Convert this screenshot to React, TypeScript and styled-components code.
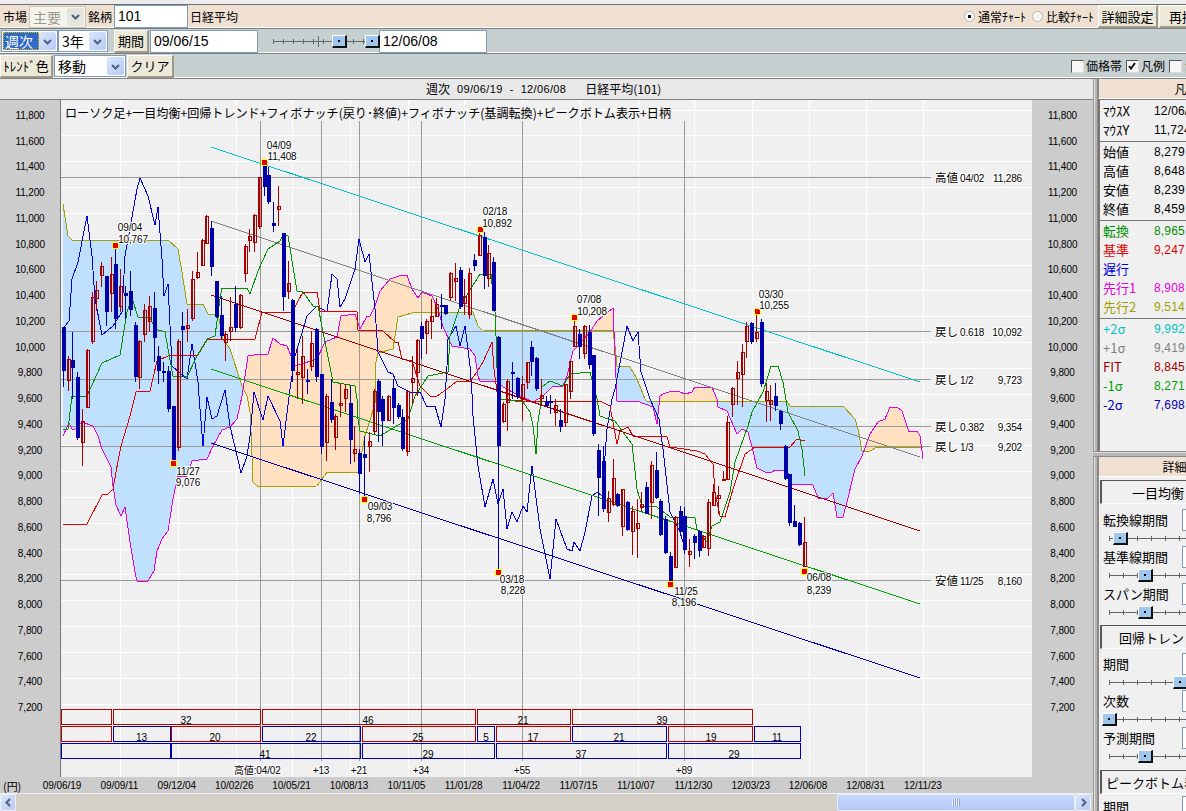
import React from 'react';
import styled, { createGlobalStyle } from 'styled-components';

const Global = createGlobalStyle`
  html, body { margin: 0; padding: 0; background: #fff; }
  * { box-sizing: border-box; }
`;

const JP = `"Noto Sans CJK JP", "Liberation Sans", sans-serif`;
const LAT = `"Liberation Sans", "Noto Sans CJK JP", sans-serif`;

const Page = styled.div`
  width: 1186px; height: 811px; overflow: hidden; display: flex; flex-direction: column;
  font-family: ${JP}; font-size: 12px; line-height: 1; color: #000; background: #f0f0f0;
`;
const TopStrip = styled.div`height: 5px; background: #ececec; border-bottom: 1px solid #707070; flex: none;`;
const Bar = styled.div<{ $peach?: boolean; $h: number }>`
  height: ${p => p.$h}px; flex: none; display: flex; align-items: center; white-space: nowrap; overflow: hidden;
  background: ${p => (p.$peach ? '#efe0d2' : '#c6d0d0')};
  border-bottom: 1px solid #808080; box-shadow: inset 0 -1px 0 #fff;
`;
const Label = styled.span<{ $ml?: number; $mr?: number; $color?: string }>`
  margin-left: ${p => p.$ml ?? 0}px; margin-right: ${p => p.$mr ?? 0}px; color: ${p => p.$color ?? '#000'};
  flex: none;
`;
const Spacer = styled.div`flex: 1;`;
const TextInput = styled.div<{ $w: number; $ml?: number; $h?: number }>`
  width: ${p => p.$w}px; height: ${p => p.$h ?? 23}px; margin-left: ${p => p.$ml ?? 0}px; flex: none;
  background: #fff; border: 1px solid #7f9db9; font-family: ${LAT}; font-size: 14px; padding: 3px 0 0 3px;
`;
const ArrowBtn = styled.div`
  width: 17px; height: 100%; flex: none; display: flex; align-items: center; justify-content: center;
  background: linear-gradient(135deg, #dce6fb, #b6c9f5); border-radius: 2px;
`;
const Chevron = ({ dir = 'down' }: { dir?: 'down' | 'left' | 'right' }) => (
  <svg width="9" height="9" viewBox="0 0 9 9">
    <path
      d={dir === 'down' ? 'M1 3l3.5 3.5L8 3' : dir === 'left' ? 'M6 1L2.5 4.5 6 8' : 'M3 1l3.5 3.5L3 8'}
      fill="none" stroke="#4d6185" strokeWidth="2"
    />
  </svg>
);
const SelectBox = styled.div<{ $w: number; $ml?: number; $disabled?: boolean }>`
  width: ${p => p.$w}px; height: 22px; margin-left: ${p => p.$ml ?? 0}px; flex: none; display: flex; align-items: center;
  border: 1px solid ${p => (p.$disabled ? '#c9c7ba' : '#7f9db9')}; padding: 1px;
  color: ${p => (p.$disabled ? '#9a9a92' : '#000')}; font-size: 14px; background: ${p => (p.$disabled ? '#f4f3ec' : '#fff')};
`;
const SelectText = styled.span<{ $hl?: boolean }>`
  flex: 1; height: 100%; padding: 2px 0 0 2px; display: block;
  ${p => (p.$hl ? 'background:#316ac5;color:#fff;outline:1px dotted #e0c000;outline-offset:-1px;' : '')}
`;
const DisabledArrow = styled(ArrowBtn)`background: #e6e5dd;`;
const Btn = styled.div<{ $w: number; $ml?: number; $mr?: number }>`
  width: ${p => p.$w}px; height: 23px; margin-left: ${p => p.$ml ?? 0}px; margin-right: ${p => p.$mr ?? 0}px; flex: none;
  display: flex; align-items: center; justify-content: center; font-size: 13px;
  background: #ece9d8; border-top: 1px solid #fff; border-left: 1px solid #fff;
  border-right: 2px solid #9d9a88; border-bottom: 2px solid #9d9a88; overflow: hidden;
`;
const SliderTrack = styled.div<{ $w: number; $ml?: number }>`
  position: relative; width: ${p => p.$w}px; height: 11px; margin-left: ${p => p.$ml ?? 0}px; flex: none;
  background:
    linear-gradient(#666, #666) 0 5px / 100% 1px no-repeat,
    repeating-linear-gradient(90deg, #666 0 1px, transparent 1px 14px) 0 3px / 100% 5px no-repeat;
`;
const ToolbarTrack = styled(SliderTrack)`
  background:
    linear-gradient(#666, #666) 0 5px / 100% 1px no-repeat,
    linear-gradient(#666, #666) 45px 0 / 1px 100% no-repeat,
    repeating-linear-gradient(90deg, #666 0 1px, transparent 1px 10px) 0 3px / 100% 5px no-repeat;
`;
const Thumb = styled.div<{ $left: number }>`
  position: absolute; top: -1px; left: ${p => p.$left}px; width: 15px; height: 13px;
  background: #9fc7ee; border-top: 1px solid #fff; border-left: 1px solid #fff;
  border-right: 2px solid #111; border-bottom: 2px solid #111;
  &::after { content: ''; position: absolute; left: 5px; top: 4px; width: 2px; height: 2px; background: #000; }
`;
const Radio = styled.div<{ $on?: boolean; $ml?: number }>`
  width: 11px; height: 11px; border-radius: 50%; margin-left: ${p => p.$ml ?? 0}px; flex: none;
  background: radial-gradient(circle, ${p => (p.$on ? '#111 0 1.8px' : '#eee 0 1.8px')}, #f8f8f8 2px 100%);
  border: 1px solid #b5b5ad; margin-right: 3px;
`;
const Check = styled.div<{ $ml?: number }>`
  width: 13px; height: 13px; margin-left: ${p => p.$ml ?? 0}px; flex: none; margin-right: 2px; background: #f6f6f6;
  border: 1px solid #555; border-right-color: #ddd; border-bottom-color: #ddd; display: flex; align-items: center; justify-content: center;
`;

const Main = styled.div`flex: 1; min-height: 0; display: flex;`;
const ChartCol = styled.div`width: 1093px; flex: none; display: flex; flex-direction: column;`;
const TitleBand = styled.div`
  height: 21px; flex: none; background: #e8e8e8; border-bottom: 1px solid #808080; display: flex; align-items: center;
  padding-left: 426px; font-size: 12px; white-space: nowrap;
`;
const TitleDate = styled.span<{ $ml: number }>`
  margin-left: ${p => p.$ml}px; font-family: ${LAT}; font-size: 11px; letter-spacing: 0.35px; flex: none;
`;
const ChartRow = styled.div`height: 677px; flex: none; display: flex;`;
const Axis = styled.div<{ $w: number; $line?: boolean }>`
  width: ${p => p.$w}px; flex: none; background: #ccc; display: flex; flex-direction: column; padding-top: 0;
  border-right: ${p => (p.$line ? '1px solid #777' : 'none')};
`;
const AxisLabel = styled.div`
  height: 25.75px; display: flex; align-items: center; justify-content: center;
  font-family: ${LAT}; font-size: 10px; letter-spacing: -0.15px; flex: none;
`;
const AxisTop = styled.div`height: 0; margin-top: 3px; flex: none;`;
const ChartSvg = styled.svg`width: 971px; height: 677px; flex: none; display: block;`;
const DateAxis = styled.div`
  height: 17px; flex: none; background: #ccc; border-bottom: 1px solid #eee; display: flex; align-items: center; padding-top: 2px;
  font-family: ${LAT}; font-size: 10px; letter-spacing: -0.05px;
`;
const Yen = styled.span`width: 33.3px; padding-left: 3px; font-family: ${JP}; font-size: 11px; flex: none;`;
const DateLabel = styled.span`width: 57.4px; text-align: center; flex: none;`;
const ScrollBar = styled.div`
  flex: 1; background: #d4d0c8; display: flex; align-items: stretch;
`;
const ScrollBtn = styled.div`
  width: 16px; flex: none; display: flex; align-items: center; justify-content: center;
  background: linear-gradient(135deg, #dce6fb, #b6c9f5); border: 1px solid #eef2fd; border-radius: 2px;
`;
const ScrollThumb = styled.div`
  width: 238px; margin-left: 821px; flex: none; display: flex; align-items: center; justify-content: center;
  background: linear-gradient(#c7d7fb, #b4c9f7); border: 1px solid #e6edfd; border-radius: 2px;
  &::after { content: ''; width: 8px; height: 7px; background: repeating-linear-gradient(90deg, #eef3fe 0 1px, #8aa4dc 1px 2px); }
`;

const Splitter = styled.div`
  width: 5px; flex: none; background: linear-gradient(90deg, #999 0 1px, #e2e2e2 1px 2px, #b5b5b5 2px 4px, #888 4px);
`;
const Panel = styled.div`width: 176px; flex: none; display: flex; flex-direction: column; background: #f0f0f0;`;
const PeachHead = styled.div`
  height: 20px; flex: none; background: #efe0d2; display: flex; align-items: center; justify-content: center;
  border-left: 1px solid #888; border-bottom: 1px solid #fff;
`;
const Legend = styled.div`
  height: 352px; flex: none; padding-top: 1px; border-left: 2px solid #777; border-top: 1px solid #777; background: #f0f0f0;
`;
const LegendGroup = styled.div`border-bottom: 1px solid #777; padding: 0 0 2px 3px;`;
const LegendLast = styled.div`padding: 0 0 2px 3px;`;
const LegendRow = styled.div<{ $color?: string }>`
  height: 19px; display: flex; align-items: center; color: ${p => p.$color ?? '#000'}; font-size: 13px;
`;
const LegendKey = styled.span`width: 51px; flex: none;`;
const LegendVal = styled.span`font-family: ${LAT}; font-size: 12px; letter-spacing: 0.15px;`;
const HSplit = styled.div`
  height: 6px; flex: none; background: linear-gradient(#888 0 1px, #ddd 1px 2px, #b8b8b8 2px 5px, #888 5px); margin-left: -5px;
`;
const Form = styled.div`flex: 1; min-height: 0; overflow: hidden; padding: 3px 0 0 1px; display: flex; flex-direction: column; border-left: 1px solid #888;`;
const TabHead = styled.div<{ $mt?: number; $mb?: number }>`
  width: 114px; height: 24px; flex: none; margin-top: ${p => p.$mt ?? 0}px; margin-bottom: ${p => p.$mb ?? 0}px; display: flex; align-items: center; justify-content: center;
  font-size: 13px; white-space: nowrap; border-top: 1px solid #555; border-left: 2px solid #555; border-bottom: 1px solid #fff; background: #f0f0f0;
`;
const Field = styled.div`flex: none; height: 37px; display: flex; flex-direction: column;`;
const FieldTop = styled.div`height: 23px; display: flex; align-items: center; justify-content: space-between; flex: none; width: 102px; padding-left: 3px; white-space: nowrap; font-size: 13px;`;
const SmallInput = styled(TextInput)`height: 22px;`;
const SliderRow = styled.div`flex: 1; display: flex; align-items: center; padding-left: 9px;`;

const Tx = styled.text`font-family: ${LAT}; font-size: 10px; fill: #000; letter-spacing: -0.15px;`;
const Halo = styled(Tx)`paint-order: stroke; stroke: #fff; stroke-width: 2px; stroke-linejoin: round;`;
const JpTx = styled(Halo)`font-family: ${JP}; font-size: 11.5px; letter-spacing: 0;`;
const Caption = styled.text`font-family: ${JP}; font-size: 12.5px; fill: #000;`;

const yv = (v: number) => 705 - (v - 7200) * 0.1291;
const AXIS = Array.from({ length: 24 }, (_, i) => 11800 - i * 200);
const fmt = (v: number) => v.toLocaleString('en-US');
const VGRID = [120.5, 178.5, 236, 292.5, 350.5, 408, 464.5, 522.5, 580, 638, 694.5, 752, 809, 866, 923];
const DATES = ['09/06/19', '09/09/11', '09/12/04', '10/02/26', '10/05/21', '10/08/13', '10/11/05', '11/01/28', '11/04/22', '11/07/15', '11/10/07', '11/12/30', '12/03/23', '12/06/08', '12/08/31', '12/11/23'];
const FIBV = [260, 321, 359.5, 421.5, 522, 684];
const FIBH = [178, 332, 380, 427, 447, 581];

// page pixel coordinates: [x, bodyTop, bodyBottom, wickTop, wickBottom, up]
type C = [number, number, number, number, number, number];
const CANDLES: C[] = [
  [63, 328, 372, 328, 388, 0], [68, 360, 381, 357, 392, 1], [72, 361, 369, 333, 400, 0], [77, 378, 439, 373, 441, 0],
  [82, 422, 443, 410, 467, 1], [87, 351, 408, 350, 408, 1], [92, 298, 342, 293, 345, 1], [96, 291, 299, 282, 312, 1],
  [101, 267, 276, 263, 288, 1], [106, 277, 313, 277, 327, 0], [111, 275, 294, 258, 313, 1], [115, 265, 320, 247, 330, 0],
  [120, 287, 307, 270, 313, 1], [125, 294, 297, 287, 320, 0], [130, 292, 311, 272, 317, 0], [135, 326, 378, 323, 383, 0],
  [139, 342, 378, 341, 390, 1], [144, 311, 335, 305, 343, 1], [149, 307, 322, 297, 333, 1], [154, 309, 339, 293, 363, 0],
  [158, 357, 372, 347, 385, 0], [163, 372, 374, 363, 383, 0], [168, 372, 410, 367, 413, 0], [173, 407, 462, 407, 462, 0],
  [178, 342, 448, 340, 452, 1], [182, 327, 331, 313, 378, 0], [187, 326, 329, 310, 343, 1], [192, 280, 319, 272, 322, 1],
  [197, 273, 278, 253, 280, 1], [202, 241, 266, 240, 266, 1], [206, 217, 244, 216, 245, 1], [211, 229, 268, 222, 277, 0],
  [216, 282, 318, 282, 319, 0], [221, 316, 337, 297, 340, 0], [225, 335, 343, 332, 362, 1], [230, 328, 332, 298, 342, 1],
  [235, 305, 329, 287, 333, 0], [240, 296, 328, 295, 330, 1], [245, 247, 274, 245, 283, 1], [249, 237, 241, 230, 253, 1],
  [254, 216, 243, 215, 253, 1], [259, 178, 227, 178, 230, 1], [264, 166, 188, 165, 197, 0], [268, 176, 203, 168, 205, 0],
  [273, 224, 227, 203, 233, 0], [278, 207, 210, 187, 227, 1], [283, 234, 298, 234, 312, 0], [288, 284, 292, 262, 300, 1],
  [292, 301, 372, 300, 383, 0], [297, 373, 375, 350, 400, 1], [302, 357, 378, 337, 405, 1], [307, 381, 383, 370, 395, 0],
  [311, 344, 367, 332, 372, 1], [316, 330, 378, 329, 383, 0], [321, 375, 448, 375, 455, 0], [326, 397, 443, 395, 462, 1],
  [331, 403, 421, 380, 424, 0], [335, 417, 438, 415, 451, 1], [340, 404, 406, 385, 418, 1], [345, 390, 399, 385, 413, 1],
  [350, 404, 441, 387, 465, 0], [354, 450, 454, 427, 463, 1], [359, 454, 475, 450, 495, 0], [364, 455, 459, 437, 497, 0],
  [369, 442, 447, 433, 473, 1], [374, 392, 432, 390, 435, 1], [378, 382, 413, 380, 443, 0], [382, 400, 422, 397, 447, 0],
  [388, 397, 421, 396, 421, 1], [393, 389, 409, 380, 425, 0], [398, 406, 418, 404, 420, 0], [402, 418, 450, 410, 452, 0],
  [407, 392, 452, 392, 457, 1], [412, 379, 383, 357, 405, 1], [417, 341, 373, 340, 397, 1], [421, 327, 340, 323, 360, 0],
  [426, 322, 334, 320, 355, 1], [431, 317, 322, 300, 340, 1], [436, 305, 317, 299, 318, 1], [441, 306, 308, 295, 330, 0],
  [445, 306, 315, 306, 316, 0], [450, 274, 298, 273, 302, 1], [455, 279, 282, 264, 302, 1], [460, 271, 308, 268, 310, 0],
  [464, 297, 304, 280, 316, 1], [469, 274, 315, 269, 320, 1], [474, 261, 267, 255, 272, 0], [479, 236, 256, 233, 257, 1],
  [484, 238, 277, 233, 290, 0], [488, 254, 279, 246, 288, 1], [493, 263, 312, 258, 312, 0], [498, 338, 447, 337, 570, 0],
  [503, 405, 422, 403, 424, 1], [507, 382, 403, 380, 432, 1], [512, 373, 375, 363, 400, 0], [517, 379, 398, 378, 400, 0],
  [522, 385, 400, 377, 422, 1], [527, 363, 383, 363, 390, 1], [531, 348, 363, 342, 377, 0], [536, 359, 390, 358, 392, 0],
  [541, 396, 399, 380, 407, 1], [546, 402, 407, 397, 408, 0], [550, 402, 404, 396, 415, 0], [555, 406, 413, 400, 427, 1],
  [560, 421, 428, 410, 433, 0], [565, 385, 423, 385, 428, 1], [570, 362, 392, 362, 400, 1], [574, 327, 347, 320, 347, 1],
  [579, 335, 348, 330, 360, 0], [584, 327, 354, 326, 360, 1], [589, 333, 366, 326, 370, 0], [593, 356, 435, 356, 437, 0],
  [598, 451, 479, 445, 517, 0], [603, 462, 510, 447, 513, 0], [608, 499, 513, 492, 523, 1], [613, 479, 505, 460, 507, 1],
  [617, 495, 507, 494, 508, 0], [622, 490, 527, 490, 537, 1], [627, 503, 531, 502, 532, 0], [632, 512, 532, 507, 556, 1],
  [637, 524, 529, 500, 559, 1], [641, 505, 508, 493, 513, 1], [646, 488, 515, 483, 515, 0], [651, 466, 503, 462, 520, 1],
  [656, 471, 499, 453, 500, 0], [660, 502, 536, 500, 537, 0], [665, 520, 554, 517, 555, 0], [670, 557, 583, 553, 583, 0],
  [675, 518, 568, 517, 569, 1], [680, 512, 533, 507, 534, 0], [684, 517, 551, 508, 555, 0], [689, 552, 555, 540, 568, 1],
  [694, 537, 544, 535, 560, 0], [699, 532, 552, 531, 558, 0], [703, 537, 548, 536, 549, 1], [708, 503, 549, 500, 557, 1],
  [713, 493, 506, 485, 507, 1], [718, 496, 499, 487, 515, 1], [723, 480, 481, 472, 481, 1], [727, 423, 480, 417, 481, 1],
  [732, 389, 405, 388, 418, 1], [737, 373, 379, 362, 406, 1], [742, 353, 375, 345, 408, 1], [746, 327, 342, 323, 359, 1],
  [751, 324, 343, 323, 345, 0], [756, 333, 339, 313, 343, 1], [761, 323, 385, 320, 388, 0], [766, 392, 401, 384, 423, 1],
  [770, 401, 405, 386, 422, 1], [775, 397, 407, 384, 412, 0], [780, 412, 425, 411, 431, 0], [785, 447, 480, 446, 481, 0],
  [789, 475, 524, 475, 527, 0], [794, 522, 528, 506, 528, 0], [799, 524, 546, 523, 547, 0], [804, 543, 567, 518, 568, 1],
];

const S2 = '63,205 68,237 72,241 168,241 178,250 182,273 187,305 203,305 208,315 218,315 223,340 230,350 242,387 247,397 250,413 251,433 253,483 258,488 317,487 327,473 358,473 365,437 375,405 376,363 378,354 393,350 398,318 412,314 473,313 478,327 482,331 613,332 615,347 617,367 630,368 637,380 645,400 647,402 787,402 790,407 843,407 855,420 858,430 862,452 870,452 877,448 923,448';
const S1 = '63,437 69,424 72,430 75,430 82,423 93,427 98,437 102,450 111,468 113,487 116,506 121,517 125,508 130,543 135,573 137,582 148,582 154,572 157,552 162,540 168,532 173,500 177,480 178,477 187,477 192,462 207,460 213,447 222,431 230,428 237,420 242,397 248,357 260,355 268,355 273,339 280,345 287,347 295,367 317,360 325,343 337,338 341,317 355,315 360,330 367,317 370,317 375,307 380,292 390,280 402,276 407,276 412,290 418,299 422,293 432,297 438,310 443,328 452,347 470,350 475,357 478,377 480,382 497,383 503,388 520,397 533,403 543,397 552,388 563,387 567,377 573,352 578,347 590,333 597,322 613,309 614,333 617,402 637,402 653,408 657,425 660,397 663,395 672,392 680,393 685,395 692,393 695,388 712,388 717,400 718,408 727,412 737,435 742,430 748,433 753,452 757,469 765,473 772,473 775,471 787,471 792,485 813,486 818,499 827,500 833,494 837,518 843,518 847,503 855,470 862,457 870,435 878,423 885,420 890,408 897,408 902,412 909,433 917,432 920,437 923,460';
const rev = (s: string) => s.split(' ').reverse().join(' ');
const CLOUD = `${S1} ${rev(S2)}`;
const ORANGE: [number, number][] = [[243, 438], [590, 614], [658, 717], [863, 924]];
const BLUE: [number, number][] = [[60, 243], [438, 590], [614, 658], [717, 863]];

const KIJUN = '63,525 87,525 102,496 108,495 113,490 118,462 121,447 130,417 136,393 150,392 157,362 170,356 198,356 207,341 255,340 262,313 292,313 303,293 317,293 320,312 357,313 358,331 383,332 395,343 398,343 402,360 412,362 420,387 430,397 437,397 447,390 457,382 470,382 477,373 483,363 492,343 494,370 498,400 523,402 600,402 610,407 617,445 620,432 628,428 633,437 667,438 670,448 697,452 705,455 713,465 715,493 720,517 725,518 733,490 745,455 755,448 790,448 797,440 805,442';
const TENKAN = '63,430 68,430 72,397 87,397 102,364 120,356 127,313 132,299 138,318 150,318 155,330 165,333 173,377 187,378 197,357 207,340 215,337 220,300 222,289 247,289 250,295 258,272 268,250 280,242 283,236 288,237 297,292 303,293 313,307 318,307 323,333 333,383 355,387 357,400 358,420 360,432 380,437 408,420 415,397 428,377 448,373 450,337 460,307 480,275 491,275 495,313 496,337 498,400 523,403 530,413 533,427 536,455 538,423 540,410 542,388 550,382 563,387 570,375 590,373 597,400 600,417 608,420 615,422 622,432 632,445 637,490 642,507 657,508 670,518 695,519 697,530 707,543 712,527 720,523 730,493 735,463 748,427 752,413 763,393 768,377 771,367 778,367 783,383 788,413 798,432 802,450 805,477';
const CHIKOU = '63,330 69,322 72,280 78,263 87,217 92,257 95,300 102,336 113,327 122,313 125,257 137,190 140,179 148,197 155,226 158,208 162,260 164,297 168,285 172,367 187,380 192,345 198,383 199,397 203,447 207,398 212,420 217,417 225,391 230,427 235,448 241,474 247,457 250,437 254,393 263,421 268,397 280,422 283,447 290,390 295,357 307,317 317,307 327,313 332,275 337,280 340,308 345,300 355,270 359,240 365,263 369,255 375,310 378,353 388,373 393,375 398,387 410,393 420,393 427,408 435,407 441,428 445,400 447,367 448,340 456,327 460,347 465,327 470,367 472,395 473,417 478,467 485,508 493,480 498,505 503,490 507,530 512,513 517,523 523,507 527,513 532,467 540,530 550,580 556,520 567,550 572,552 574,543 580,552 585,533 592,497 597,493 602,497 607,430 612,400 615,390 627,327 633,342 638,333 641,373 650,400 659,420 663,450 670,513 680,533 685,550';

const TRENDS: [number, number, number, number, string][] = [
  [211, 148, 920, 383, '#00c4c8'], [211, 222, 920, 458, '#808080'], [211, 296, 920, 532, '#a00000'],
  [211, 370, 920, 605, '#00a000'], [211, 444, 920, 679, '#0000b0'],
];
const PEAKS = [[115, 246], [264, 163], [173, 464], [364, 500], [480, 230], [498, 573], [574, 318], [670, 585], [757, 312], [804, 572]];
const PLABELS: [number, number, string][] = [
  [279, 150, '04/09'], [282, 161, '11,408'], [130, 232, '09/04'], [133, 244, '10,767'], [188, 476, '11/27'], [188, 487, '9,076'],
  [380, 511, '09/03'], [379, 523, '8,796'], [495, 216, '02/18'], [497, 228, '10,892'], [589, 304, '07/08'], [592, 316, '10,208'],
  [512, 584, '03/18'], [513, 595, '8,228'], [686, 596, '11/25'], [684, 607, '8,196'], [771, 299, '03/30'], [774, 310, '10,255'],
  [819, 582, '06/08'], [819, 595, '8,239'],
];
const FIBLABELS: [number, string, string, string][] = [
  [183, '高値', '04/02', '11,286'], [337, '戻し', '0.618', '10,092'], [385, '戻し', '1/2', '9,723'],
  [432, '戻し', '0.382', '9,354'], [452, '戻し', '1/3', '9,202'], [586, '安値', '11/25', '8,160'],
];
const RED = '#b00000';
const NAVY = '#0000b0';
const BOXES: [number, number, number, string][] = [
  [710, 61, 111.5, RED], [710, 113.5, 260.5, RED], [710, 262.5, 475.5, RED], [710, 477.5, 570.5, RED], [710, 572.5, 752.5, RED],
  [727, 61, 111.5, RED], [727, 113.5, 170.5, NAVY], [727, 171.5, 260.5, RED], [727, 262.5, 360.5, NAVY], [727, 362.5, 475.5, RED],
  [727, 477.5, 494.5, NAVY], [727, 496.5, 570.5, RED], [727, 572.5, 666.5, NAVY], [727, 668.5, 752.5, RED], [727, 754.5, 800.5, NAVY],
  [744, 61, 170.5, NAVY], [744, 171.5, 360.5, NAVY], [744, 362.5, 494.5, NAVY], [744, 496.5, 666.5, NAVY], [744, 668.5, 800.5, NAVY],
];
const BOXLABELS: [number, number, string][] = [
  [186, 725, '32'], [368, 725, '46'], [523, 725, '21'], [662, 725, '39'], [141.5, 742, '13'], [215, 742, '20'], [311, 742, '22'], [418, 742, '25'],
  [486, 742, '5'], [533, 742, '17'], [619, 742, '21'], [711, 742, '19'], [777, 742, '11'], [265, 759, '41'], [428, 759, '29'], [581, 759, '37'], [734, 759, '29'],
];
const CAPTIONS: [number, string][] = [[321, '+13'], [359, '+21'], [421, '+34'], [522, '+55'], [684, '+89']];

const Chart = () => (
  <ChartSvg viewBox="61 101 971 677" shapeRendering="crispEdges">
    <rect x="61" y="101" width="971" height="677" fill="#f0f0f0" />
    {AXIS.map(v => <line key={v} x1="61" x2="1032" y1={yv(v)} y2={yv(v)} stroke="#fff" />)}
    {VGRID.map(x => <line key={x} x1={x} x2={x} y1="101" y2="778" stroke="#fff" />)}
    <defs>
      {BLUE.map(([a, b], i) => <clipPath key={i} id={`b${i}`}><rect x={a} y="101" width={b - a} height="677" /></clipPath>)}
      {ORANGE.map(([a, b], i) => <clipPath key={i} id={`o${i}`}><rect x={a} y="101" width={b - a} height="677" /></clipPath>)}
    </defs>
    {BLUE.map((_, i) => <polygon key={i} points={CLOUD} fill="#c0e0ff" clipPath={`url(#b${i})`} />)}
    {ORANGE.map((_, i) => <polygon key={i} points={CLOUD} fill="#ffe0c0" clipPath={`url(#o${i})`} />)}
    {FIBH.map(y => <line key={y} x1="61" x2="931" y1={y} y2={y} stroke="#999" />)}
    {FIBV.map(x => <line key={x} x1={x} x2={x} y1="122" y2="762" stroke="#999" />)}
    <polyline points={S2} fill="none" stroke="#a0a000" />
    <polyline points={S1} fill="none" stroke="#e000e0" />
    <polyline points={CHIKOU} fill="none" stroke="#0000e0" />
    <polyline points={KIJUN} fill="none" stroke="#e00000" />
    <polyline points={TENKAN} fill="none" stroke="#009000" />
    {TRENDS.map(([a, b, c, d, col]) => <line key={col} x1={a} y1={b} x2={c} y2={d} stroke={col} />)}
    {CANDLES.map(([x, t, b, wt, wb, up], i) => {
      const col = up ? '#a80000' : '#0000a8';
      return (
        <g key={i}>
          <line x1={x + 0.5} x2={x + 0.5} y1={wt} y2={wb} stroke={col} />
          {up
            ? <rect x={x - 1} y={t + 0.5} width="3" height={b - t} fill="none" stroke={col} />
            : <rect x={x - 1.5} y={t} width="4" height={b - t} fill={col} />}
        </g>
      );
    })}
    {PEAKS.map(([x, y]) => (
      <g key={x}>
        <rect x={x - 3} y={y - 3} width="7" height="7" rx="2" fill="#ffff00" />
        <rect x={x - 2} y={y - 2} width="5" height="5" fill="#e00000" />
      </g>
    ))}
    {PLABELS.map(([x, y, t]) => <Halo key={t + y} x={x} y={y} textAnchor="middle">{t}</Halo>)}
    {FIBLABELS.map(([y, a, b, c]) => (
      <g key={y}>
        <JpTx x="935" y={y}>{a}</JpTx>
        <Halo x="960" y={y}>{b}</Halo>
        <Halo x="1022" y={y} textAnchor="end">{c}</Halo>
      </g>
    ))}
    {BOXES.map(([y, a, b, col], i) => <rect key={i} x={a} y={y + 0.5} width={b - a} height="15" fill="none" stroke={col} />)}
    {BOXLABELS.map(([x, y, t]) => <Tx key={x} x={x} y={y} textAnchor="middle">{t}</Tx>)}
    <Halo x="234" y="775">高値:04/02</Halo>
    {CAPTIONS.map(([x, t]) => <Halo key={x} x={x} y="775" textAnchor="middle">{t}</Halo>)}
    <Caption x="65" y="119" textLength="606" lengthAdjust="spacingAndGlyphs">ローソク足+一目均衡+回帰トレンド+フィボナッチ(戻り･終値)+フィボナッチ(基調転換)+ピークボトム表示+日柄</Caption>
  </ChartSvg>
);

const AxisCol = ({ w, line }: { w: number; line?: boolean }) => (
  <Axis $w={w} $line={line}>
    <AxisTop />
    {AXIS.map(v => <AxisLabel key={v}>{fmt(v)}</AxisLabel>)}
  </Axis>
);

const LEG1: [string, string][] = [['始値', '8,279'], ['高値', '8,648'], ['安値', '8,239'], ['終値', '8,459']];
const LEG2: [string, string, string][] = [['転換', '8,965', '#009000'], ['基準', '9,247', '#e00000'], ['遅行', '', '#0000e0'], ['先行1', '8,908', '#e000e0'], ['先行2', '9,514', '#a0a000']];
const LEG3: [string, string, string][] = [['+2σ', '9,992', '#00c4c8'], ['+1σ', '9,419', '#808080'], ['FIT', '8,845', '#a00000'], ['-1σ', '8,271', '#00a000'], ['-2σ', '7,698', '#0000b0']];

const SliderField = ({ label, left }: { label: string; left: number }) => (
  <Field>
    <FieldTop>{label}<SmallInput $w={20} /></FieldTop>
    <SliderRow><SliderTrack $w={78}><Thumb $left={left} /></SliderTrack></SliderRow>
  </Field>
);

export default function App() {
  return (
    <Page>
      <Global />
      <TopStrip />
      <Bar $peach $h={24}>
        <Label $ml={3}>市場</Label>
        <SelectBox $w={57} $ml={2} $disabled><SelectText>主要</SelectText><DisabledArrow><Chevron /></DisabledArrow></SelectBox>
        <Label $ml={2}>銘柄</Label>
        <TextInput $w={74} $ml={2}>101</TextInput>
        <Label $ml={2}>日経平均</Label>
        <Spacer />
        <Radio $on />
        <Label>通常ﾁｬｰﾄ</Label>
        <Radio $ml={6} />
        <Label>比較ﾁｬｰﾄ</Label>
        <Btn $w={60} $ml={4}>詳細設定</Btn>
        <Btn $w={60} $ml={1} $mr={-33}>再描画</Btn>
      </Bar>
      <Bar $h={25}>
        <SelectBox $w={57} $ml={1}><SelectText $hl>週次</SelectText><ArrowBtn><Chevron /></ArrowBtn></SelectBox>
        <SelectBox $w={50}><SelectText>3年</SelectText><ArrowBtn><Chevron /></ArrowBtn></SelectBox>
        <Btn $w={35} $ml={6}>期間</Btn>
        <TextInput $w={108} $ml={1}>09/06/15</TextInput>
        <ToolbarTrack $w={106} $ml={15}><Thumb $left={59} /><Thumb $left={92} /></ToolbarTrack>
        <TextInput $w={108}>12/06/08</TextInput>
      </Bar>
      <Bar $h={25}>
        <Btn $w={53}>ﾄﾚﾝﾄﾞ色</Btn>
        <SelectBox $w={72} $ml={1}><SelectText>移動</SelectText><ArrowBtn><Chevron /></ArrowBtn></SelectBox>
        <Btn $w={47} $ml={1}>クリア</Btn>
        <Spacer />
        <Check />
        <Label>価格帯</Label>
        <Check $ml={4}>
          <svg width="10" height="10" viewBox="0 0 10 10"><path d="M2 5l2 2.5L8 2" fill="none" stroke="#111" strokeWidth="2" /></svg>
        </Check>
        <Label>凡例</Label>
        <Check $ml={4} />
        <Label $mr={-10}>シ</Label>
      </Bar>
      <Main>
        <ChartCol>
          <TitleBand>
            <Label>週次</Label>
            <TitleDate $ml={7}>09/06/19</TitleDate>
            <TitleDate $ml={7}>-</TitleDate>
            <TitleDate $ml={7}>12/06/08</TitleDate>
            <Label $ml={19}>日経平均(101)</Label>
          </TitleBand>
          <ChartRow>
            <AxisCol w={61} line />
            <Chart />
            <AxisCol w={61} />
          </ChartRow>
          <DateAxis>
            <Yen>(円)</Yen>
            {DATES.map(d => <DateLabel key={d}>{d}</DateLabel>)}
          </DateAxis>
          <ScrollBar>
            <ScrollBtn><Chevron dir="left" /></ScrollBtn>
            <ScrollThumb />
            <ScrollBtn><Chevron dir="right" /></ScrollBtn>
          </ScrollBar>
        </ChartCol>
        <Splitter />
        <Panel>
          <PeachHead>凡例</PeachHead>
          <Legend>
            <LegendGroup>
              <LegendRow><LegendKey>ﾏｳｽX</LegendKey><LegendVal>12/06/08</LegendVal></LegendRow>
              <LegendRow><LegendKey>ﾏｳｽY</LegendKey><LegendVal>11,724</LegendVal></LegendRow>
            </LegendGroup>
            <LegendGroup>
              {LEG1.map(([k, v]) => <LegendRow key={k}><LegendKey>{k}</LegendKey><LegendVal>{v}</LegendVal></LegendRow>)}
            </LegendGroup>
            <LegendGroup>
              {LEG2.map(([k, v, c]) => <LegendRow key={k} $color={c}><LegendKey>{k}</LegendKey><LegendVal>{v}</LegendVal></LegendRow>)}
            </LegendGroup>
            <LegendLast>
              {LEG3.map(([k, v, c]) => <LegendRow key={k} $color={c}><LegendKey>{k}</LegendKey><LegendVal>{v}</LegendVal></LegendRow>)}
            </LegendLast>
          </Legend>
          <HSplit />
          <PeachHead>詳細設定</PeachHead>
          <Form>
            <TabHead $mb={4}>一目均衡</TabHead>
            <SliderField label="転換線期間" left={4} />
            <SliderField label="基準線期間" left={29} />
            <SliderField label="スパン期間" left={29} />
            <TabHead $mt={6} $mb={3}>回帰トレンド</TabHead>
            <SliderField label="期間" left={64} />
            <SliderField label="次数" left={-7} />
            <SliderField label="予測期間" left={29} />
            <TabHead $mt={7} $mb={1}>ピークボトム表示</TabHead>
            <SliderField label="期間" left={29} />
          </Form>
        </Panel>
      </Main>
    </Page>
  );
}
